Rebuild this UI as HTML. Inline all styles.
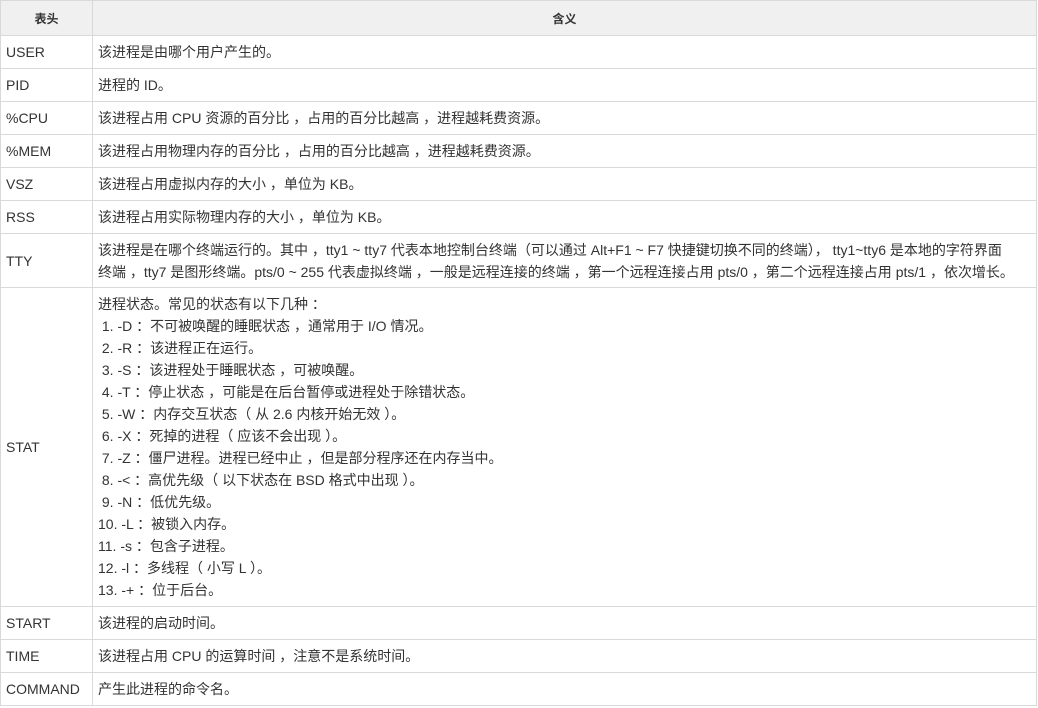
<!DOCTYPE html>
<html><head><meta charset="utf-8"><style>
body{margin:0;background:#fff;}
table{border-collapse:collapse;width:1037px;table-layout:fixed;font-family:"Liberation Sans","Microsoft YaHei","Noto Sans CJK SC",sans-serif;font-size:14px;color:#333;}
td,th{border:1px solid #d9d9d9;padding:0 5px;vertical-align:middle;white-space:nowrap;overflow:hidden;}
th{background:#f0f0f0;font-weight:bold;height:34px;text-align:center;font-size:12px;}
td.k{font-size:14px;}
.s{line-height:22px;}
</style></head><body>
<table>
<col style="width:92px"><col>
<tr><th>表头</th><th>含义</th></tr>
<tr style="height:33px"><td class="k">USER</td><td>该进程是由哪个用户产生的。</td></tr>
<tr style="height:33px"><td class="k">PID</td><td>进程的 ID。</td></tr>
<tr style="height:33px"><td class="k">%CPU</td><td>该进程占用 CPU 资源的百分比 ，占用的百分比越高 ，进程越耗费资源。</td></tr>
<tr style="height:33px"><td class="k">%MEM</td><td>该进程占用物理内存的百分比 ，占用的百分比越高 ，进程越耗费资源。</td></tr>
<tr style="height:33px"><td class="k">VSZ</td><td>该进程占用虚拟内存的大小 ，单位为 KB。</td></tr>
<tr style="height:33px"><td class="k">RSS</td><td>该进程占用实际物理内存的大小 ，单位为 KB。</td></tr>
<tr style="height:54px"><td class="k">TTY</td><td class="s">该进程是在哪个终端运行的。其中 ，tty1 ~ tty7 代表本地控制台终端（可以通过 Alt+F1 ~ F7 快捷键切换不同的终端）， tty1~tty6 是本地的字符界面<br>终端 ，tty7 是图形终端。pts/0 ~ 255 代表虚拟终端 ，一般是远程连接的终端 ，第一个远程连接占用 pts/0 ，第二个远程连接占用 pts/1 ，依次增长。</td></tr>
<tr style="height:319px"><td class="k">STAT</td><td class="s">进程状态。常见的状态有以下几种 ：<br>&nbsp;1. -D ：不可被唤醒的睡眠状态 ，通常用于 I/O 情况。<br>&nbsp;2. -R ：该进程正在运行。<br>&nbsp;3. -S ：该进程处于睡眠状态 ，可被唤醒。<br>&nbsp;4. -T ：停止状态 ，可能是在后台暂停或进程处于除错状态。<br>&nbsp;5. -W ：内存交互状态（ 从 2.6 内核开始无效 ）。<br>&nbsp;6. -X ：死掉的进程（ 应该不会出现 ）。<br>&nbsp;7. -Z ：僵尸进程。进程已经中止 ，但是部分程序还在内存当中。<br>&nbsp;8. -&lt; ：高优先级（ 以下状态在 BSD 格式中出现 ）。<br>&nbsp;9. -N ：低优先级。<br>10. -L ：被锁入内存。<br>11. -s ：包含子进程。<br>12. -l ：多线程（ 小写 L ）。<br>13. -+ ：位于后台。</td></tr>
<tr style="height:33px"><td class="k">START</td><td>该进程的启动时间。</td></tr>
<tr style="height:33px"><td class="k">TIME</td><td>该进程占用 CPU 的运算时间 ，注意不是系统时间。</td></tr>
<tr style="height:33px"><td class="k">COMMAND</td><td>产生此进程的命令名。</td></tr>
</table>
</body></html>
